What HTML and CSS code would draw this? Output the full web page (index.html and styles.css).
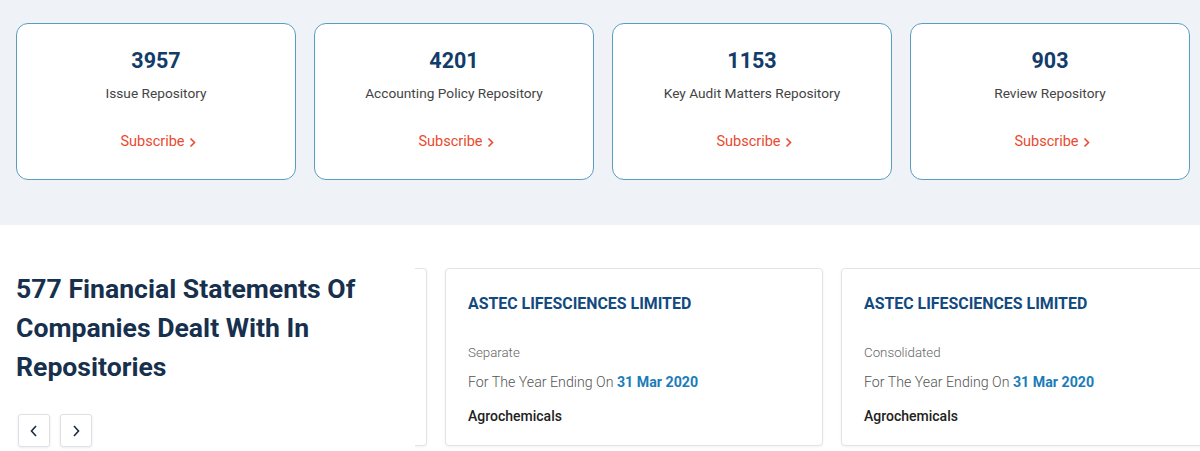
FILE: index.html
```html
<!DOCTYPE html>
<html>
<head>
<meta charset="utf-8">
<link rel="stylesheet" href="styles.css">
</head>
<body>
<section class="repos">
  <div class="repo-card">
    <div class="num">3957</div>
    <div class="label">Issue Repository</div>
    <a class="sub">Subscribe <svg class="chev" width="7" height="11" viewBox="0 0 7 11"><path d="M1.5 1.5 L5.5 5.5 L1.5 9.5" fill="none" stroke="#ea4a2f" stroke-width="1.6"/></svg></a>
  </div>
  <div class="repo-card">
    <div class="num">4201</div>
    <div class="label">Accounting Policy Repository</div>
    <a class="sub">Subscribe <svg class="chev" width="7" height="11" viewBox="0 0 7 11"><path d="M1.5 1.5 L5.5 5.5 L1.5 9.5" fill="none" stroke="#ea4a2f" stroke-width="1.6"/></svg></a>
  </div>
  <div class="repo-card">
    <div class="num">1153</div>
    <div class="label">Key Audit Matters Repository</div>
    <a class="sub">Subscribe <svg class="chev" width="7" height="11" viewBox="0 0 7 11"><path d="M1.5 1.5 L5.5 5.5 L1.5 9.5" fill="none" stroke="#ea4a2f" stroke-width="1.6"/></svg></a>
  </div>
  <div class="repo-card">
    <div class="num">903</div>
    <div class="label">Review Repository</div>
    <a class="sub">Subscribe <svg class="chev" width="7" height="11" viewBox="0 0 7 11"><path d="M1.5 1.5 L5.5 5.5 L1.5 9.5" fill="none" stroke="#ea4a2f" stroke-width="1.6"/></svg></a>
  </div>
</section>
<section class="fs">
  <div class="intro">
    <h2>577 Financial Statements Of Companies Dealt With In Repositories</h2>
    <div class="nav">
      <button class="navbtn"><svg width="10" height="14" viewBox="0 0 10 14"><path d="M7 2 L2.5 7 L7 12" fill="none" stroke="#1b2c40" stroke-width="1.6"/></svg></button>
      <button class="navbtn"><svg width="10" height="14" viewBox="0 0 10 14"><path d="M3 2 L7.5 7 L3 12" fill="none" stroke="#1b2c40" stroke-width="1.6"/></svg></button>
    </div>
  </div>
  <div class="track">
    <div class="fs-card stub"></div>
    <div class="fs-card">
      <div class="co">ASTEC LIFESCIENCES LIMITED</div>
      <div class="type">Separate</div>
      <div class="year">For The Year Ending On <b>31 Mar 2020</b></div>
      <div class="ind">Agrochemicals</div>
    </div>
    <div class="fs-card">
      <div class="co">ASTEC LIFESCIENCES LIMITED</div>
      <div class="type">Consolidated</div>
      <div class="year">For The Year Ending On <b>31 Mar 2020</b></div>
      <div class="ind">Agrochemicals</div>
    </div>
  </div>
</section>
</body>
</html>
```
FILE: styles.css
```css
* { box-sizing: border-box; }
html, body { margin: 0; padding: 0; }
body {
  font-family: Roboto, "Liberation Sans", Arial, sans-serif;
  background: #fff;
  width: 1200px;
  height: 451px;
  overflow: hidden;
}
.repos {
  background: #eff3f7;
  height: 225px;
  padding: 23px 0 0 16px;
  display: flex;
  gap: 18px;
}
.repo-card {
  flex: none;
  width: 280px;
  height: 157px;
  background: #fff;
  border: 1.5px solid #5b9cc2;
  border-radius: 12px;
  display: flex;
  flex-direction: column;
  align-items: center;
  padding-top: 25px;
}
.num {
  font-size: 21.5px;
  font-weight: 700;
  line-height: 24px;
  color: #123d6a;
}
.label {
  margin-top: 10px;
  font-size: 13.7px;
  line-height: 20px;
  color: #444;
}
.sub {
  margin-top: 29px;
  font-size: 14.5px;
  line-height: 20px;
  color: #ea4a2f;
  display: flex;
  align-items: center;
  gap: 4px;
  padding-left: 4px;
}
.chev { display: block; }
.fs {
  display: flex;
  padding-top: 43px;
  height: 226px;
}
.intro {
  width: 415px;
  flex: none;
  padding-left: 16px;
  padding-top: 1px;
  background: #fff;
}
.intro h2 {
  margin: 0;
  font-size: 26.6px;
  line-height: 39px;
  font-weight: 700;
  color: #17304d;
  width: 380px;
}
.nav {
  margin-top: 28px;
  display: flex;
  gap: 10px;
  padding-left: 2px;
}
.navbtn {
  width: 32px;
  height: 33px;
  background: #fff;
  border: 1px solid #dde1e5;
  border-radius: 3px;
  box-shadow: 0 1px 3px rgba(0,0,0,0.08);
  display: flex;
  align-items: center;
  justify-content: center;
  padding: 0;
}
.track {
  display: flex;
  gap: 18px;
  overflow: hidden;
  flex: 1;
}
.fs-card {
  flex: none;
  width: 378px;
  height: 178px;
  border: 1px solid #e2e4e7;
  border-radius: 4px;
  box-shadow: 0 1px 3px rgba(0,0,0,0.06);
  padding: 25px 0 0 22px;
  background: #fff;
}
.fs-card.stub {
  width: 12px;
  border-left: none;
  border-radius: 0 4px 4px 0;
  padding: 0;
}
.co {
  font-size: 15.9px;
  line-height: 20px;
  font-weight: 700;
  color: #114a80;
}
.type {
  margin-top: 30px;
  font-size: 13.3px;
  line-height: 18px;
  font-weight: 300;
  color: #666;
}
.year {
  margin-top: 10px;
  font-size: 14.2px;
  line-height: 20px;
  font-weight: 300;
  color: #555;
}
.year b { font-weight: 700; color: #1a7cb8; }
.ind {
  margin-top: 14px;
  font-size: 14px;
  line-height: 20px;
  font-weight: 500;
  color: #222;
}
```
